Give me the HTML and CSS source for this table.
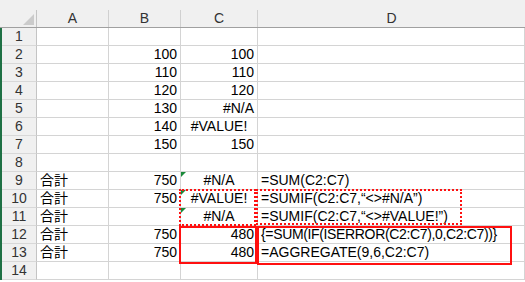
FILE: index.html
```html
<!DOCTYPE html>
<html lang="ja">
<head>
<meta charset="utf-8">
<link rel="stylesheet" href="styles.css">
</head>
<body>
<div class="sheet">
  <div class="grid">
    <div class="hd corner"><div class="hd-in"><span class="tri"></span></div></div>
    <div class="hd"><div class="hd-in">A</div></div>
    <div class="hd"><div class="hd-in">B</div></div>
    <div class="hd"><div class="hd-in">C</div></div>
    <div class="hd"><div class="hd-in last">D</div></div>

    <div class="rn">1</div><div class="c"></div><div class="c"></div><div class="c"></div><div class="c"></div>
    <div class="rn">2</div><div class="c"></div><div class="c r">100</div><div class="c r">100</div><div class="c"></div>
    <div class="rn">3</div><div class="c"></div><div class="c r">110</div><div class="c r">110</div><div class="c"></div>
    <div class="rn">4</div><div class="c"></div><div class="c r">120</div><div class="c r">120</div><div class="c"></div>
    <div class="rn">5</div><div class="c"></div><div class="c r">130</div><div class="c r">#N/A</div><div class="c"></div>
    <div class="rn">6</div><div class="c"></div><div class="c r">140</div><div class="c m">#VALUE!</div><div class="c"></div>
    <div class="rn">7</div><div class="c"></div><div class="c r">150</div><div class="c r">150</div><div class="c"></div>
    <div class="rn">8</div><div class="c"></div><div class="c"></div><div class="c"></div><div class="c"></div>
    <div class="rn">9</div><div class="c">合計</div><div class="c r">750</div><div class="c m err">#N/A</div><div class="c">=SUM(C2:C7)</div>
    <div class="rn">10</div><div class="c">合計</div><div class="c r">750</div><div class="c m err">#VALUE!</div><div class="c">=SUMIF(C2:C7,“&lt;&gt;#N/A”)</div>
    <div class="rn">11</div><div class="c">合計</div><div class="c"></div><div class="c m err">#N/A</div><div class="c">=SUMIF(C2:C7,“&lt;&gt;#VALUE!”)</div>
    <div class="rn">12</div><div class="c">合計</div><div class="c r">750</div><div class="c r">480</div><div class="c tight">{=SUM(IF(ISERROR(C2:C7),0,C2:C7))}</div>
    <div class="rn">13</div><div class="c">合計</div><div class="c r">750</div><div class="c r">480</div><div class="c">=AGGREGATE(9,6,C2:C7)</div>
    <div class="rn">14</div><div class="c"></div><div class="c"></div><div class="c"></div><div class="c"></div>
  </div>
  <div class="box dot box-c1"></div>
  <div class="box dot box-d1"></div>
  <div class="box solid box-c2"></div>
  <div class="box solid box-d2"></div>
</div>
</body>
</html>
```
FILE: styles.css
```css
html, body {
  margin: 0;
  padding: 0;
  background: #fff;
}
.sheet {
  position: relative;
  width: 525px;
  height: 282px;
  overflow: hidden;
  background: #fff;
  font-family: "Liberation Sans", "Noto Sans CJK JP", sans-serif;
  font-size: 14px;
  color: #000;
}
.grid {
  display: grid;
  grid-template-columns: 35px 72px 72px 77px 1fr;
  grid-template-rows: 28px repeat(14, 18px);
  border-left: 2px solid #1f7145;
}
.grid > div {
  box-sizing: border-box;
}
.hd {
  background: #f0f0f0;
  border-bottom: 1px solid #a0a0a0;
  display: flex;
  align-items: flex-end;
}
.hd-in {
  flex: 1;
  height: 17px;
  border-right: 1px solid #d0d0d0;
  text-align: center;
  line-height: 17px;
  color: #333;
  position: relative;
}
.hd-in.last {
  border-right: none;
}
.corner .hd-in {
  border-right: 1px solid #c4c4c4;
}
.tri {
  position: absolute;
  right: 2px;
  bottom: 2px;
  width: 0;
  height: 0;
  border-left: 11px solid transparent;
  border-bottom: 11px solid #cbcbcb;
}
.corner {
  margin-left: -2px;
  padding-left: 2px;
}
.rn {
  background: #f0f0f0;
  border-right: 1px solid #c4c4c4;
  border-bottom: 1px solid #d8d8d8;
  text-align: center;
  line-height: 17px;
  color: #333;
}
.c {
  border-right: 1px solid #d4d4d4;
  border-bottom: 1px solid #d4d4d4;
  line-height: 17px;
  padding: 0 3px;
  white-space: nowrap;
  position: relative;
}
.c.r { text-align: right; }
.c.m { text-align: center; }
.c.tight { letter-spacing: -0.35px; }
.err::before {
  content: "";
  position: absolute;
  left: 0;
  top: 0;
  border-top: 5px solid #1a8a3a;
  border-right: 5px solid transparent;
}
.box {
  position: absolute;
  box-sizing: border-box;
}
.dot {
  border: 2px dotted #ff1010;
}
.solid {
  border: 2px solid #ff1010;
}
.box-c1 { left: 179px; top: 189px; width: 77px; height: 37px; }
.box-d1 { left: 256px; top: 189px; width: 206px; height: 36px; }
.box-c2 { left: 179px; top: 226px; width: 78px; height: 38px; }
.box-d2 { left: 257px; top: 226px; width: 255px; height: 39px; }
```
